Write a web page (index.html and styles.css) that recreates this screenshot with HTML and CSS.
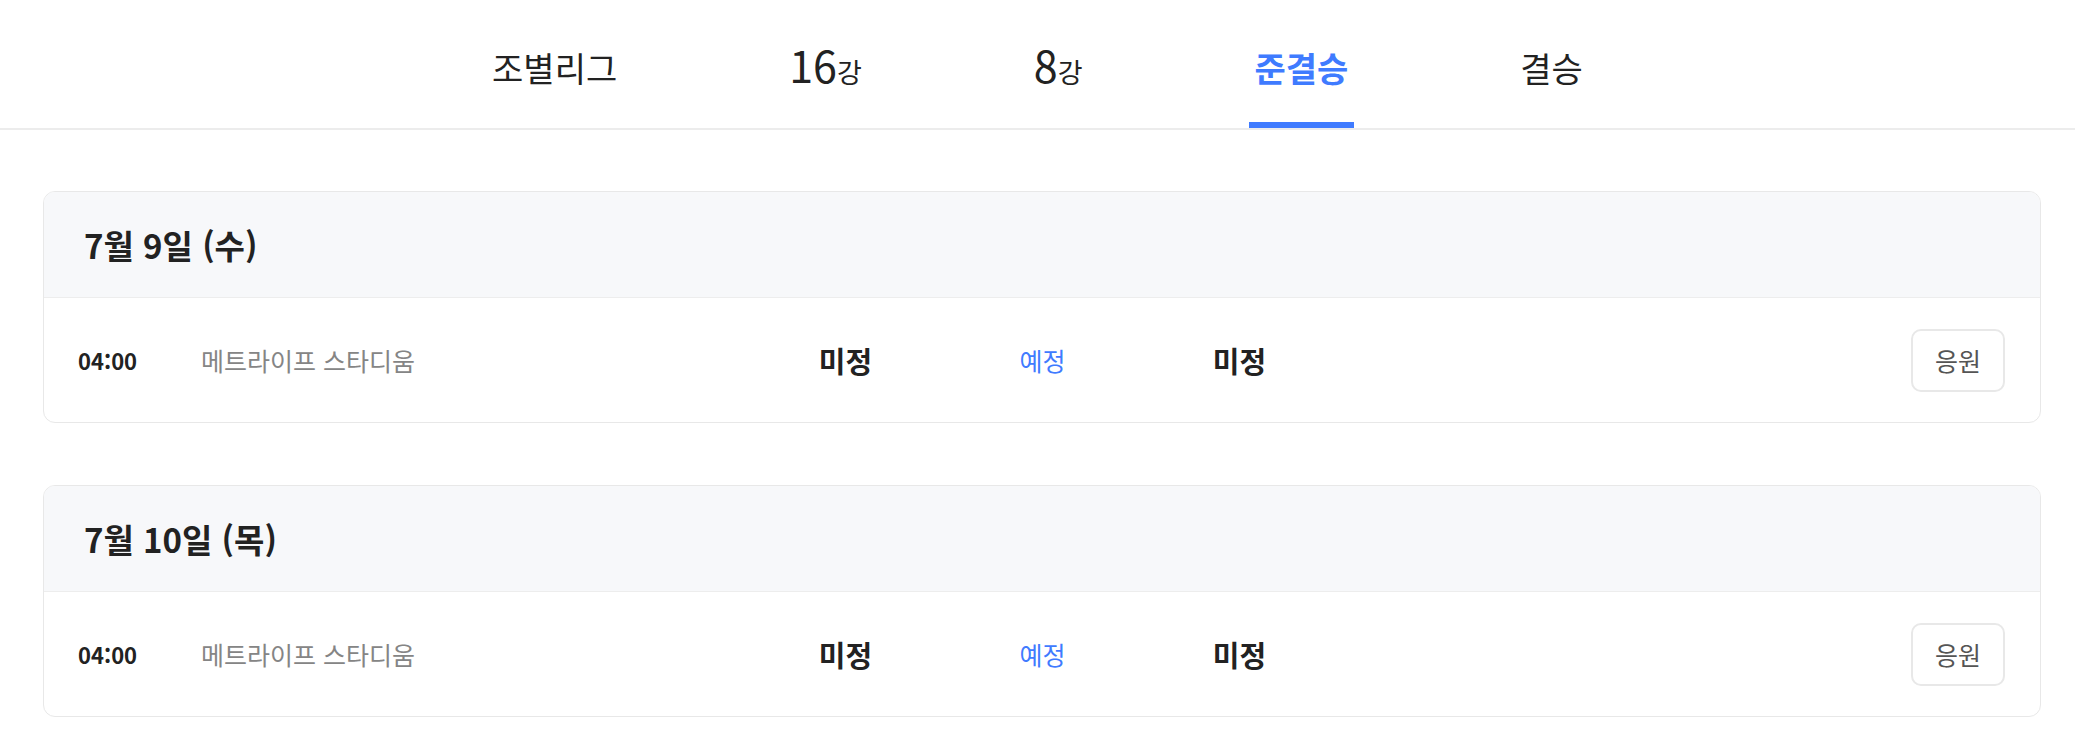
FILE: index.html
```html
<!DOCTYPE html>
<html lang="ko">
<head>
<meta charset="utf-8">
<title>일정</title>
<link rel="stylesheet" href="styles.css">
</head>
<body>
<nav class="tabs">
  <a class="tab"><span class="label">조별리그</span></a>
  <a class="tab"><span class="label"><span class="num">16</span><span class="unit">강</span></span></a>
  <a class="tab"><span class="label"><span class="num">8</span><span class="unit">강</span></span></a>
  <a class="tab active"><span class="label">준결승</span></a>
  <a class="tab"><span class="label">결승</span></a>
</nav>
<main class="schedule">
  <section class="day-card">
    <header class="day-head">7월 9일 (수)</header>
    <div class="match-row">
      <span class="time">04:00</span>
      <span class="venue">메트라이프 스타디움</span>
      <div class="match">
        <span class="team">미정</span>
        <span class="status">예정</span>
        <span class="team">미정</span>
      </div>
      <button class="cheer">응원</button>
    </div>
  </section>
  <section class="day-card">
    <header class="day-head">7월 10일 (목)</header>
    <div class="match-row">
      <span class="time">04:00</span>
      <span class="venue">메트라이프 스타디움</span>
      <div class="match">
        <span class="team">미정</span>
        <span class="status">예정</span>
        <span class="team">미정</span>
      </div>
      <button class="cheer">응원</button>
    </div>
  </section>
</main>
</body>
</html>
```
FILE: styles.css
```css
* { box-sizing: border-box; }
html, body { margin: 0; padding: 0; background: #fff; }
body {
  font-family: "Noto Sans CJK KR", "Noto Sans", sans-serif;
  color: #222;
}
.tabs {
  display: flex;
  justify-content: center;
  gap: 160px;
  height: 130px;
  border-bottom: 2px solid #ececec;
}
.tab {
  display: flex;
  align-items: center;
  padding: 14px 6px 0;
  height: 128px;
  font-size: 34px;
  line-height: 44px;
  color: #222;
  border-bottom: 6px solid transparent;
  cursor: pointer;
}
.tab .label {
  display: block;
  white-space: nowrap;
}
.tab .num {
  font-size: 43px;
  line-height: 44px;
  font-weight: 400;
}
.tab .unit { font-size: 27px; }
.tab.active {
  color: #3f7bff;
  font-weight: 700;
  border-bottom-color: #3f7bff;
}
.schedule {
  display: flex;
  flex-direction: column;
  gap: 62px;
  padding: 61px 34px 0 43px;
}
.day-card {
  border: 1px solid #e8e8e8;
  border-radius: 12px;
  overflow: hidden;
  background: #fff;
}
.day-head {
  display: flex;
  align-items: center;
  height: 106px;
  padding-left: 40px;
  background: #f7f8fa;
  border-bottom: 1px solid #ededed;
  font-size: 33px;
  font-weight: 700;
  color: #222;
}
.match-row {
  display: flex;
  align-items: center;
  height: 124px;
  padding: 0 35px 0 34px;
}
.time {
  width: 123px;
  font-size: 22px;
  font-weight: 700;
  color: #222;
}
.venue {
  width: 546px;
  font-size: 25px;
  color: #858585;
}
.match {
  display: grid;
  grid-template-columns: repeat(3, 197px);
  align-items: center;
  text-align: center;
}
.team {
  font-size: 29px;
  font-weight: 700;
  color: #222;
}
.status {
  font-size: 25px;
  color: #3f7bff;
}
.cheer {
  margin-left: auto;
  width: 94px;
  height: 63px;
  border: 2px solid #e8e8e8;
  border-radius: 10px;
  background: #fff;
  font-family: inherit;
  font-size: 25px;
  color: #555;
  cursor: pointer;
}
```
